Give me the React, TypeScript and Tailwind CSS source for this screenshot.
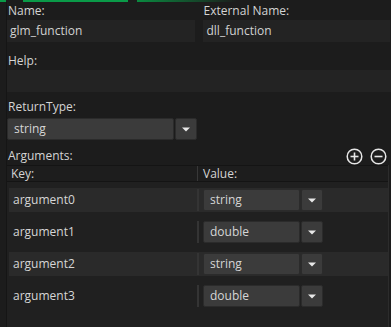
import React from 'react';

const args = [
  { key: 'argument0', type: 'string' },
  { key: 'argument1', type: 'double' },
  { key: 'argument2', type: 'string' },
  { key: 'argument3', type: 'double' },
];

function Caret() {
  return (
    <svg width="8" height="5" viewBox="0 0 8 5">
      <path d="M0 0.5h8L4 4.5z" fill="#e8e8e8" />
    </svg>
  );
}

function Dropdown({ value, width }: { value: string; width: string }) {
  return (
    <div className="flex h-[22px] gap-px">
      <div className={`${width} flex items-center rounded-[2px] border border-[#2b2b2b] bg-[#3b3b3b] px-[6px] text-[#d6d6d6]`}>
        {value}
      </div>
      <div className="flex w-[22px] items-center justify-center rounded-[2px] border border-[#2b2b2b] bg-[#3b3b3b]">
        <Caret />
      </div>
    </div>
  );
}

function CircleIcon({ plus }: { plus?: boolean }) {
  return (
    <svg width="17" height="17" viewBox="0 0 17 17">
      <circle cx="8.5" cy="8.5" r="7.3" fill="none" stroke="#e6e6e6" strokeWidth="1.5" />
      <path d="M4.5 8.5h8" stroke="#e6e6e6" strokeWidth="1.6" />
      {plus && <path d="M8.5 4.5v8" stroke="#e6e6e6" strokeWidth="1.6" />}
    </svg>
  );
}

export default function App() {
  return (
    <div
      className="relative flex h-[327px] w-[391px] flex-col overflow-hidden bg-[#1c1c1c] text-[12px] leading-[18px] text-[#d4d4d4]"
      style={{ fontFamily: '"Open Sans", "Noto Sans", sans-serif' }}
    >
      {/* tab highlight strip */}
      <div className="flex h-[2px] shrink-0">
        <div className="w-[6px] bg-[#0a9a48]" />
        <div className="ml-[17px] w-[105px] bg-[#0a9a48]" />
        <div className="ml-[9px] w-[100px] bg-gradient-to-r from-[#0a8a40] to-transparent" />
      </div>

      <div className="flex flex-1 flex-col border-l border-[#151515] ml-[6px]">
        {/* Name / External Name */}
        <div className="grid w-[383px] grid-cols-2 gap-[8px]">
          <div className="flex flex-col">
            <span className="pl-px">Name:</span>
            <div className="flex h-[22px] items-center bg-[#232323] pl-[3px] text-[#d2d2d2]">glm_function</div>
          </div>
          <div className="flex flex-col">
            <span className="pl-px">External Name:</span>
            <div className="flex h-[22px] items-center bg-[#232323] pl-[4px] text-[#d2d2d2]">dll_function</div>
          </div>
        </div>

        {/* Help */}
        <span className="mt-[10px] pl-px">Help:</span>
        <div className="h-[22px] bg-[#232323]" />

        {/* ReturnType */}
        <span className="mt-[6px] pl-px">ReturnType:</span>
        <div className="mt-[2px]">
          <Dropdown value="string" width="w-[167px]" />
        </div>

        {/* Arguments */}
        <div className="mt-[7px] flex h-[18px] items-center justify-between pr-[4px]">
          <span className="pl-px">Arguments:</span>
          <div className="flex items-center gap-[7px] pt-[1px]">
            <CircleIcon plus />
            <CircleIcon />
          </div>
        </div>

        <div className="flex flex-1 flex-col w-[382px] border-r border-[#2c2c2c] bg-[#202020]">
          {/* header */}
          <div className="flex h-[17px] items-center border-y border-[#141414] bg-[#1d1d1d]">
            <div className="w-[190px] pl-[4px]">Key:</div>
            <div className="h-full w-px bg-[#383838]" />
            <div className="pl-[5px]">Value:</div>
          </div>

          {/* rows */}
          <div className="flex flex-col gap-[8px] pt-[6px] pl-[2px]">
            {args.map((a, i) => (
              <div
                key={a.key}
                className={`flex h-[24px] items-center ${i % 2 === 0 ? 'bg-[#2a2a2a]' : ''}`}
              >
                <div className="w-[188px] pl-[4px] text-[#d6d6d6]">{a.key}</div>
                <div className="h-[22px] w-[2px] bg-[#343434]" />
                <div className="pl-[4px]">
                  <Dropdown value={a.type} width="w-[97px]" />
                </div>
              </div>
            ))}
          </div>
        </div>
      </div>
    </div>
  );
}
